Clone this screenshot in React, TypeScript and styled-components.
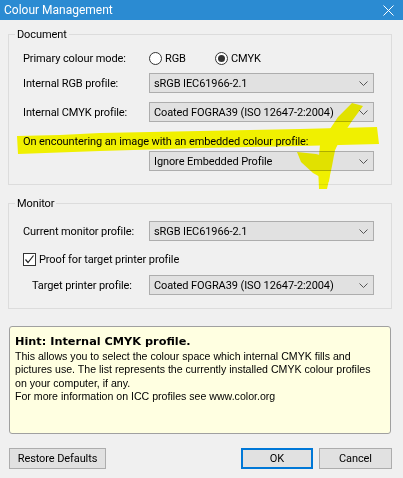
import * as React from 'react';
import styled, { createGlobalStyle } from 'styled-components';

const GlobalStyle = createGlobalStyle`
    html, body {
        margin: 0;
        padding: 0;
        background: #f0f0f0;
    }
    body {
        font-family: Roboto, "Open Sans", sans-serif;
        font-size: 11px;
        letter-spacing: -0.1px;
        color: #000;
    }
`;

const Window = styled.div`
    position: relative;
    width: 403px;
    height: 478px;
    display: flex;
    flex-direction: column;
    background: #f0f0f0;
    overflow: hidden;
`;

const TitleBar = styled.div`
    height: 20px;
    flex: none;
    background: #2b8bd2;
    color: #fff;
    font-size: 12px;
    letter-spacing: 0;
    display: flex;
    align-items: center;
    justify-content: space-between;
    padding: 0 9px 0 4px;
`;

const Content = styled.div`
    display: flex;
    flex-direction: column;
    padding: 7px 11px 0 8px;
`;

const Group = styled.fieldset<{ $gap?: number }>`
    margin: ${(p) => p.$gap || 0}px 0 0 0;
    border: 1px solid #dcdcdc;
    padding: 0 16px 13px 14px;
    min-width: 0;
`;

const Legend = styled.legend`
    margin-left: -8px;
    padding: 0 2px;
    line-height: 15px;
`;

const Row = styled.div<{ $top: number; $indent?: number }>`
    display: grid;
    grid-template-columns: ${(p) => 126 - (p.$indent || 0)}px 225px;
    align-items: center;
    height: 20px;
    margin-top: ${(p) => p.$top}px;
    padding-left: ${(p) => p.$indent || 0}px;
    white-space: nowrap;
`;

const Radios = styled.div`
    display: flex;
    align-items: center;
`;

const RadioOption = styled.label`
    display: flex;
    align-items: center;
    gap: 3px;
    width: 66px;
`;

const RadioCircle = styled.span<{ $checked?: boolean }>`
    width: 13px;
    height: 13px;
    box-sizing: border-box;
    border: 1px solid #333;
    border-radius: 50%;
    background: #fff;
    display: flex;
    align-items: center;
    justify-content: center;

    &::after {
        content: '';
        display: ${(p) => (p.$checked ? 'block' : 'none')};
        width: 7px;
        height: 7px;
        border-radius: 50%;
        background: #333;
    }
`;

const Select = styled.div`
    box-sizing: border-box;
    height: 20px;
    width: 225px;
    border: 1px solid #adadad;
    background: #e1e1e1;
    display: flex;
    align-items: center;
    justify-content: space-between;
    padding: 0 5px 0 4px;
    white-space: nowrap;
`;

const Line = styled.div<{ $top: number }>`
    margin-top: ${(p) => p.$top}px;
    line-height: 14px;
`;

const CheckRow = styled.label`
    display: flex;
    align-items: center;
    gap: 3px;
    height: 20px;
    margin-top: 8px;
`;

const CheckBox = styled.span`
    width: 13px;
    height: 13px;
    box-sizing: border-box;
    border: 1px solid #333;
    background: #fff;
    display: flex;
    align-items: center;
    justify-content: center;
`;

const HintBox = styled.div`
    margin: 17px 1px 0 1px;
    height: 108px;
    box-sizing: border-box;
    border: 1px solid #a0a0a0;
    border-radius: 3px;
    background: #ffffe1;
    padding: 7px 5px;
    font-family: "Liberation Sans", Arial, sans-serif;
    font-size: 10.6px;
    letter-spacing: 0;
    line-height: 13.3px;
`;

const HintTitle = styled.div`
    font-family: "DejaVu Sans", Verdana, sans-serif;
    font-weight: bold;
    font-size: 11.3px;
    line-height: 15px;
    margin-bottom: 1px;
`;

const ButtonBar = styled.div`
    display: flex;
    align-items: center;
    margin: 14px 0 0 1px;
`;

const Button = styled.button<{ $width: number; $default?: boolean; $gap?: number }>`
    box-sizing: border-box;
    width: ${(p) => p.$width}px;
    height: 21px;
    margin: 0 0 0 ${(p) => p.$gap || 0}px;
    padding: 0;
    font: inherit;
    letter-spacing: inherit;
    color: #000;
    background: #e1e1e1;
    border: ${(p) => (p.$default ? '2px solid #0078d7' : '1px solid #adadad')};
`;

const Spacer = styled.div`
    flex: 1;
`;

const Highlighter = styled.svg`
    position: absolute;
    left: 0;
    top: 0;
    width: 403px;
    height: 478px;
    pointer-events: none;
    mix-blend-mode: multiply;
`;

const Chevron = () => (
    <svg width="9" height="5" viewBox="0 0 9 5">
        <path d="M0.5 0.5 L4.5 4.5 L8.5 0.5" fill="none" stroke="#555" strokeWidth="1" />
    </svg>
);

const Dropdown = ({ value }: { value: string }) => (
    <Select>
        <span>{value}</span>
        <Chevron />
    </Select>
);

export default function App() {
    return (
        <Window>
            <GlobalStyle />
            <TitleBar>
                <span>Colour Management</span>
                <svg width="11" height="11" viewBox="0 0 11 11">
                    <path d="M0.5 0.5 L10.5 10.5 M10.5 0.5 L0.5 10.5" stroke="#fff" strokeWidth="1" />
                </svg>
            </TitleBar>
            <Content>
                <Group>
                    <Legend>Document</Legend>
                    <Row $top={6}>
                        <span>Primary colour mode:</span>
                        <Radios>
                            <RadioOption>
                                <RadioCircle />
                                RGB
                            </RadioOption>
                            <RadioOption>
                                <RadioCircle $checked />
                                CMYK
                            </RadioOption>
                        </Radios>
                    </Row>
                    <Row $top={5}>
                        <span>Internal RGB profile:</span>
                        <Dropdown value="sRGB IEC61966-2.1" />
                    </Row>
                    <Row $top={9}>
                        <span>Internal CMYK profile:</span>
                        <Dropdown value="Coated FOGRA39 (ISO 12647-2:2004)" />
                    </Row>
                    <Line $top={13}>On encountering an image with an embedded colour profile:</Line>
                    <Row $top={2}>
                        <span />
                        <Dropdown value="Ignore Embedded Profile" />
                    </Row>
                </Group>
                <Group $gap={11}>
                    <Legend>Monitor</Legend>
                    <Row $top={10}>
                        <span>Current monitor profile:</span>
                        <Dropdown value="sRGB IEC61966-2.1" />
                    </Row>
                    <CheckRow>
                        <CheckBox>
                            <svg width="11" height="11" viewBox="0 0 11 11">
                                <path d="M1.5 5.5 L4 8.5 L9.5 1.5" fill="none" stroke="#222" strokeWidth="1.2" />
                            </svg>
                        </CheckBox>
                        Proof for target printer profile
                    </CheckRow>
                    <Row $top={6} $indent={9}>
                        <span>Target printer profile:</span>
                        <Dropdown value="Coated FOGRA39 (ISO 12647-2:2004)" />
                    </Row>
                </Group>
                <HintBox>
                    <HintTitle>Hint: Internal CMYK profile.</HintTitle>
                    <div>
                        This allows you to select the colour space which internal CMYK fills and
                        pictures use. The list represents the currently installed CMYK colour profiles
                        on your computer, if any.
                    </div>
                    <div>For more information on ICC profiles see www.color.org</div>
                </HintBox>
                <ButtonBar>
                    <Button $width={97}>Restore Defaults</Button>
                    <Spacer />
                    <Button $width={72} $default>
                        OK
                    </Button>
                    <Button $width={73} $gap={6}>
                        Cancel
                    </Button>
                </ButtonBar>
            </Content>
            {/* hand-drawn highlighter marks on top of the dialog */}
            <Highlighter viewBox="0 0 403 478">
                <g fill="#ffff00">
                    <path d="M17 136 L60 135 L100 133 L200 131 L300 129 L377 127 L379 144 L300 146 L200 148 L100 151 L18 154 Z" />
                    <path d="M352 103 L363 106 L352 121 L342 136 L335 150 L320 150 L328 132 L338 117 Z" />
                    <path d="M320 145 L336 145 L332 166 L327 189 L319 189 L318 166 Z" />
                    <path d="M297 152 L316 154 L331 158 L329 182 L313 173 L301 162 Z" />
                </g>
            </Highlighter>
        </Window>
    );
}
